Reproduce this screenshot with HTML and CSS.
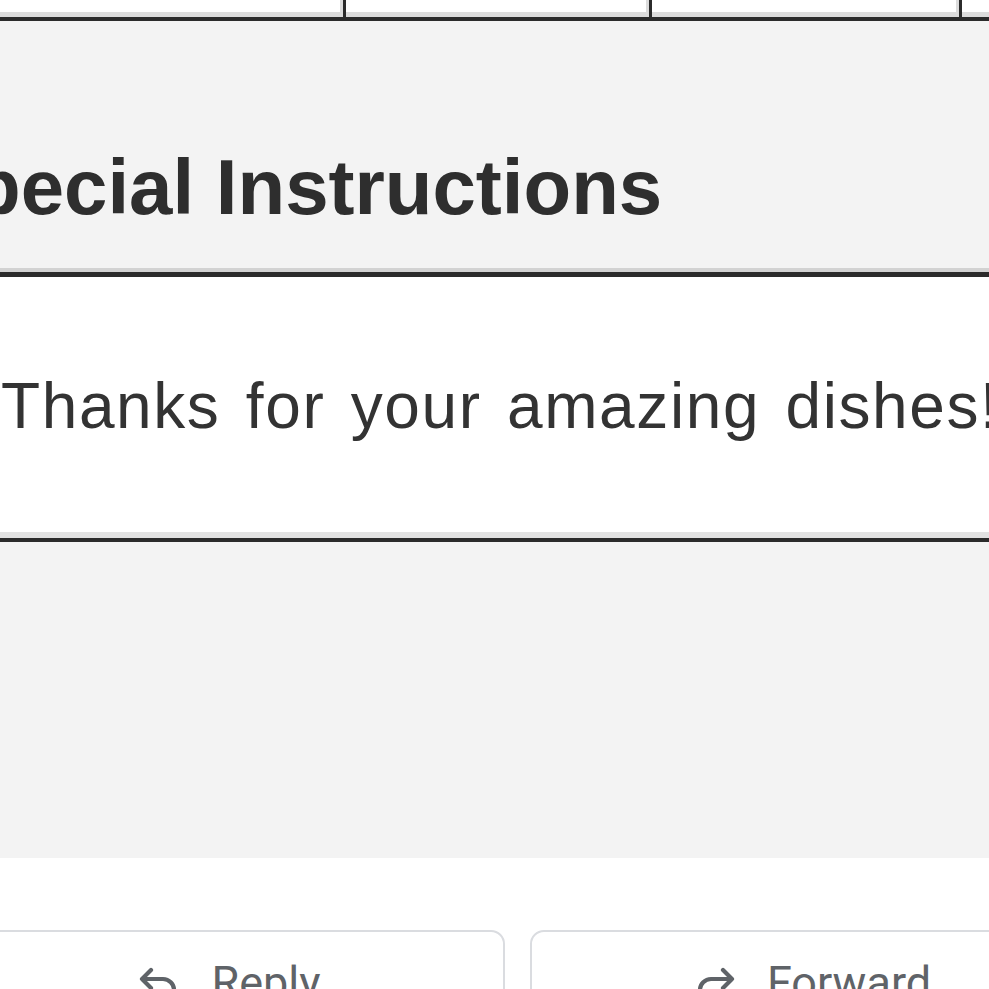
FILE: index.html
```html
<!DOCTYPE html>
<html>
<head>
<meta charset="utf-8">
<link rel="stylesheet" href="styles.css">
</head>
<body>
<div class="page">
  <div class="cells">
    <div class="cell c1"></div>
    <div class="cell c2"></div>
    <div class="cell c3"></div>
    <div class="cell c4"></div>
  </div>
  <div class="head">
    <h2 class="head-title">Special Instructions</h2>
  </div>
  <div class="note">
    <p class="note-text">Thanks for your amazing dishes!</p>
  </div>
  <div class="spacer"></div>
  <div class="actions">
    <button class="btn btn-reply">
      <svg class="ico" viewBox="0 0 24 24" width="48" height="48"><path d="M8 5 L3.5 9.5 L8 14 M3.5 9.5 H14 a5.5 5.5 0 0 1 5.5 5.5 V18" fill="none" stroke="#5f6368" stroke-width="2.1" stroke-linecap="round" stroke-linejoin="round"/></svg>
      <span>Reply</span>
    </button>
    <button class="btn btn-forward">
      <svg class="ico" viewBox="0 0 24 24" width="48" height="48"><path d="M16 5 L20.5 9.5 L16 14 M20.5 9.5 H10 a5.5 5.5 0 0 0 -5.5 5.5 V18" fill="none" stroke="#5f6368" stroke-width="2.1" stroke-linecap="round" stroke-linejoin="round"/></svg>
      <span>Forward</span>
    </button>
  </div>
</div>
</body>
</html>
```

FILE: styles.css
```css
html, body {
  margin: 0;
  padding: 0;
  background: #ffffff;
  overflow: hidden;
}
.page {
  width: 989px;
  height: 989px;
  overflow: hidden;
  font-family: "Liberation Sans", Arial, sans-serif;
}
.cells {
  display: flex;
  height: 17px;
  border-bottom: 4px solid #2b2b2b;
  background: #fff;
}
.cell {
  box-sizing: border-box;
  height: 17px;
  background: #fff;
  box-shadow: inset -3px -5px 0 #dcdcdc;
  border-right: 3px solid #2b2b2b;
  flex: none;
}
.c1 { width: 346px; }
.c2 { width: 306px; }
.c3 { width: 310px; }
.c4 { flex: 1; border-right: none; box-shadow: inset 0 -5px 0 #dcdcdc; }

.head {
  background: #f3f3f3;
  border-bottom: 4px solid #d2d2d2;
  box-shadow: 0 5px 0 #2b2b2b;
  margin-bottom: 5px;
  padding: 127px 0 42px;
}
.head-title {
  margin: 0 0 0 -79px;
  font-size: 78px;
  line-height: 78px;
  font-weight: bold;
  color: #2e2e2e;
  white-space: nowrap;
}
.note {
  background: #fff;
  padding: 97px 0 94px 1px;
  border-bottom: 6px solid #e2e2e2;
  box-shadow: 0 4px 0 #2b2b2b;
  margin-bottom: 4px;
}
.note-text {
  margin: 0;
  font-size: 64px;
  line-height: 64px;
  letter-spacing: 1.6px;
  word-spacing: 6px;
  color: #333333;
  white-space: nowrap;
}
.spacer {
  height: 316px;
  background: #f3f3f3;
}
.actions {
  display: flex;
  gap: 25px;
  margin-left: -49px;
  padding-top: 72px;
}
.btn {
  flex: none;
  width: 554px;
  height: 120px;
  box-sizing: border-box;
  border: 2px solid #dadce0;
  border-radius: 14px;
  background: #fff;
  display: flex;
  align-items: flex-start;
  justify-content: center;
  gap: 28px;
  padding: 25px 0 0;
  font-family: Roboto, "Open Sans", sans-serif;
  font-size: 45px;
  line-height: 52px;
  color: #5f6368;
}
.btn-forward { width: 562px; }
.ico {
  display: block;
  margin-top: 3px;
}
```
